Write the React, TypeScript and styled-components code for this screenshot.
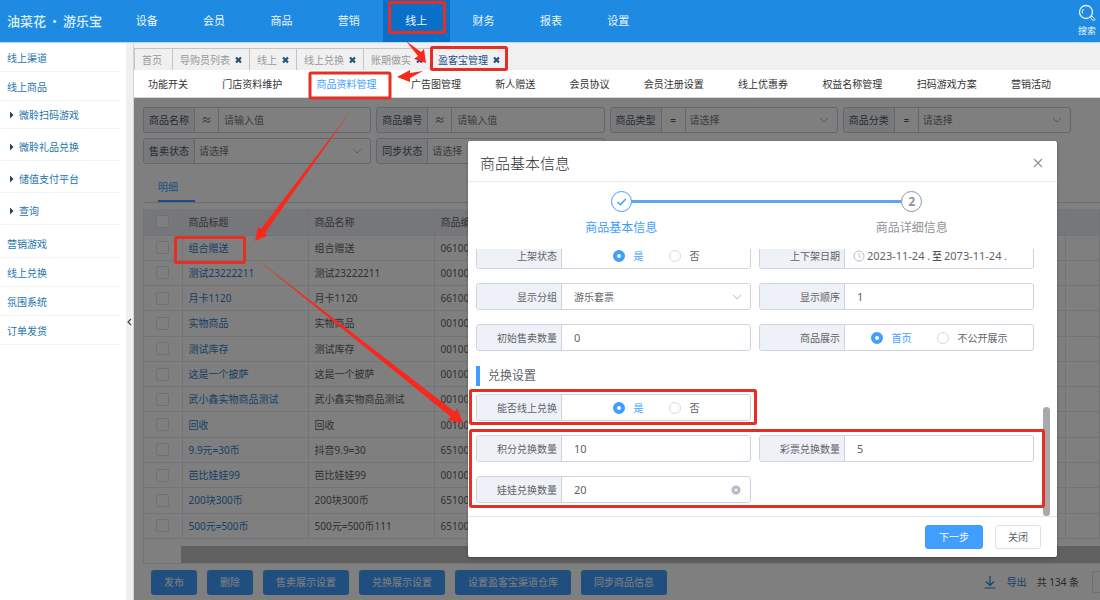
import React from "react";
import styled, { createGlobalStyle, css } from "styled-components";

const Global = createGlobalStyle`
  * { box-sizing: border-box; }
  body {
    margin: 0;
    font-family: "Noto Sans", "Noto Sans CJK SC", sans-serif;
    font-size: 10px;
    line-height: 16px;
    color: #303133;
    background: #fff;
  }
  button, input, select { font: inherit; color: inherit; margin: 0; }
  button { cursor: pointer; }
  a { text-decoration: none; color: inherit; }
  ul { list-style: none; margin: 0; padding: 0; }
  h1, h2 { margin: 0; font-weight: 400; }
`;

const Page = styled.div`
  position: relative;
  display: flex;
  flex-direction: column;
  min-height: 100vh;
  overflow: hidden;
`;

/* ---------- top bar ---------- */
const TopBar = styled.header`
  display: flex;
  height: 43px;
  background: #1e8ae2;
  border-bottom: 1px solid #b5dbf8;
  color: #eaf5ff;
`;
const Brand = styled.h1`
  width: 113px;
  padding-left: 7px;
  font-size: 13px;
  font-weight: 500;
  line-height: 42px;
  white-space: nowrap;
  color: #d9f0ff;
  span { padding: 0 2px; }
`;
const TopNav = styled.nav`
  display: flex;
  width: 49%;
`;
const TopLink = styled.a<{ $active?: boolean }>`
  flex: 1;
  text-align: center;
  font-size: 11px;
  line-height: 41px;
  background: ${(p) => (p.$active ? "#0a6fc8" : "transparent")};
`;
const SearchButton = styled.button`
  display: flex;
  flex-direction: column;
  align-items: center;
  margin-left: auto;
  padding: 4px 4px 0;
  border: 0;
  background: none;
  font-size: 9px;
  line-height: 12px;
  svg { display: block; margin-bottom: 2px; }
`;

/* ---------- side menu ---------- */
const Body = styled.div`
  display: flex;
  flex: 1;
`;
const Side = styled.nav`
  width: 126px;
  background: #fff;
`;
const SideItem = styled.li<{ $parent?: boolean }>`
  margin-bottom: ${(p) => (p.$parent ? 4 : 0)}px;
  a {
    display: flex;
    align-items: center;
    gap: 5px;
    height: ${(p) => (p.$parent ? 28 : 29)}px;
    margin-right: 6px;
    padding-top: 1px;
    padding-left: ${(p) => (p.$parent ? 9 : 7)}px;
    border-bottom: 1px solid #f3f3f3;
    color: #2474ac;
  }
`;
const Collapse = styled.button`
  display: flex;
  align-items: center;
  justify-content: center;
  width: 8px;
  padding: 0;
  border: 0;
  border-right: 1px solid #d4d4d4;
  background: #f0f0f0;
`;

/* ---------- tabs ---------- */
const Main = styled.main`
  display: flex;
  flex: 1;
  flex-direction: column;
  min-width: 0;
`;
const TabStrip = styled.div`
  display: flex;
  height: 27px;
  padding-top: 5px;
  background: #f0f0f0;
`;
const Tab = styled.div<{ $active?: boolean }>`
  display: flex;
  align-items: center;
  gap: 5px;
  padding: 1px 7px 0;
  border: solid #c4c4c4;
  border-width: 1px 0 0 1px;
  color: ${(p) => (p.$active ? "#1d4f86" : "#999")};
  &:first-child { padding-right: 10px; }
  button {
    display: flex;
    padding: 0;
    border: 0;
    background: none;
    color: #23527c;
  }
`;
const SubNav = styled.nav`
  display: flex;
  justify-content: space-between;
  height: 28px;
  padding: 0 49px 0 14px;
  border-bottom: 1px solid #d8d8d8;
  background: #fff;
`;
const SubLink = styled.a<{ $active?: boolean }>`
  line-height: 28px;
  white-space: nowrap;
  color: ${(p) => (p.$active ? "#409eff" : "#333")};
`;

/* ---------- list page ---------- */
const Content = styled.section`
  position: relative;
  flex: 1;
  padding: 9px 0 0 9px;
  background: #fff;
`;
const Mask = styled.div`
  position: absolute;
  inset: 0;
  background: rgba(0, 0, 0, 0.5);
`;
const Filters = styled.form`
  display: grid;
  grid-template-columns: repeat(4, 1fr);
  gap: 5px;
  margin-right: 29px;
`;
const Filter = styled.div`
  display: flex;
  height: 26px;
  border: 1px solid #c8cdd8;
  border-radius: 3px;
  overflow: hidden;
  line-height: 24px;
  color: #505257;
  label {
    width: 51px;
    padding-left: 5px;
    background: #f0f3f8;
    border-right: 1px solid #c8cdd8;
  }
`;
const Operator = styled.span`
  width: 24px;
  text-align: center;
  border-right: 1px solid #c8cdd8;
`;
const FieldWrap = styled.span`
  display: flex;
  flex: 1;
  align-items: center;
  min-width: 0;
  padding-right: 8px;
`;
const control = css`
  flex: 1;
  min-width: 0;
  width: 100%;
  height: 100%;
  border: 0;
  outline: 0;
  background: transparent;
  appearance: none;
`;
const FilterInput = styled.input`
  ${control}
  padding: 0 5px;
  &::placeholder { color: #777; opacity: 1; }
`;
const FilterSelect = styled.select`
  ${control}
  padding: 0 4px;
  color: #777;
`;
const ViewTabs = styled.div`
  display: flex;
  margin-top: 9px;
  padding-left: 15px;
  border-bottom: 1px solid #d5d9e2;
  button {
    height: 29px;
    min-width: 37px;
    padding: 0;
    border: 0;
    border-bottom: 2px solid #409eff;
    background: none;
    color: #409eff;
    text-align: left;
    white-space: nowrap;
  }
`;
const TableBox = styled.div`
  margin-top: 6px;
  border: solid #e4e8ef;
  border-width: 0 0 1px 1px;
`;
const Col = styled.col<{ $w: number }>`
  width: ${(p) => p.$w}px;
`;
const Table = styled.table`
  width: 100%;
  height: 330px;
  border-collapse: collapse;
  table-layout: fixed;
  th, td {
    padding: 0 6px;
    border: solid #e4e8ef;
    border-width: 0 1px 1px 0;
    text-align: left;
    font-weight: 400;
    white-space: nowrap;
    overflow: hidden;
  }
  th { height: 26px; background: #eceff5; color: #666; }
  td { color: #606266; }
  td a { color: #2f7cc9; }
  th:first-child, td:first-child { padding: 0; text-align: center; }
`;
const Tick = styled.input`
  display: block;
  appearance: none;
  width: 13px;
  height: 13px;
  margin: 0 auto;
  border: 1px solid #dfe2e9;
  border-radius: 2px;
  background: #fff;
`;
const ScrollTrack = styled.div`
  height: 17px;
  margin: 7px 0 0 37px;
  background: #c1c1c1;
`;
const Actions = styled.div`
  display: flex;
  align-items: center;
  gap: 10px;
  height: 36px;
  padding-left: 8px;
`;
const ActionButton = styled.button`
  height: 25px;
  padding: 0 13px;
  border: 0;
  border-radius: 3px;
  background: #409eff;
  color: #fff;
  white-space: nowrap;
`;
const Exporter = styled.div`
  display: flex;
  align-items: center;
  gap: 10px;
  margin-left: auto;
  white-space: nowrap;
  color: #505257;
  a { display: flex; align-items: center; gap: 11px; color: #2f7be0; }
`;
const PageSize = styled.select`
  appearance: none;
  width: 8px;
  height: 22px;
  margin-left: 3px;
  padding: 0;
  border: 1px solid #dcdfe6;
  border-right: 0;
  border-radius: 3px 0 0 3px;
  background: #fff;
`;

/* ---------- dialog ---------- */
const Dialog = styled.div`
  position: absolute;
  top: 141px;
  right: 43px;
  width: 589px;
  border-radius: 2px;
  background: #fff;
  box-shadow: 0 1px 3px rgba(0, 0, 0, 0.3);
  color: #606266;
`;
const DialogHead = styled.div`
  display: flex;
  align-items: center;
  justify-content: space-between;
  height: 41px;
  padding: 3px 14px 0 12px;
  border-bottom: 1px solid #ebebeb;
  h2 { font-size: 15px; line-height: 24px; font-weight: 300; color: #303133; }
  button { display: flex; padding: 0; border: 0; background: none; color: #909399; }
`;
const Steps = styled.ol`
  display: flex;
  height: 67px;
  margin: 0;
  padding: 9px 0 0 8px;
  list-style: none;
`;
const Step = styled.li<{ $done?: boolean }>`
  position: relative;
  flex: 1;
  display: flex;
  flex-direction: column;
  align-items: center;
  gap: 7px;
  font-size: 12px;
  line-height: 18px;
  color: ${(p) => (p.$done ? "#409eff" : "#909399")};
  ${(p) =>
    p.$done &&
    css`
      &::after {
        content: "";
        position: absolute;
        top: 9px;
        left: 50%;
        width: 100%;
        height: 3px;
        background: #5ba6ef;
      }
    `}
`;
const StepDot = styled.span`
  position: relative;
  z-index: 1;
  display: flex;
  align-items: center;
  justify-content: center;
  width: 21px;
  height: 21px;
  border: 1px solid currentColor;
  border-radius: 50%;
  background: #fff;
  font-weight: 700;
`;
const FormScroll = styled.div`
  display: flex;
  height: 267px;
  overflow: hidden;
  padding-right: 7px;
`;
const Form = styled.form`
  flex: 1;
  margin-top: -7px;
  padding: 0 16px 0 8px;
`;
const ScrollThumb = styled.div`
  width: 7px;
  height: 109px;
  margin-top: auto;
  margin-left: -7px;
  border-radius: 4px;
  background: #a9a9a9;
`;
const Fields = styled.div`
  display: grid;
  grid-template-columns: 1fr 1fr;
  gap: 14px 8px;
`;
const Field = styled.div`
  display: flex;
  height: 27px;
  border: 1px solid #cdd3df;
  border-radius: 3px;
  overflow: hidden;
`;
const FieldLabel = styled.label`
  width: 85px;
  padding-right: 4px;
  border-right: 1px solid #cdd3df;
  background: #eef1f7;
  line-height: 26px;
  text-align: right;
`;
const Text = styled.input`
  ${control}
  padding: 0 12px;
  font-size: 11px;
`;
const Choice = styled.select`
  ${control}
  padding: 0 12px;
`;
const Radios = styled.div`
  display: flex;
  flex: 1;
  align-items: center;
  justify-content: center;
  gap: 25px;
`;
const RadioLabel = styled.label<{ $on?: boolean }>`
  display: flex;
  align-items: center;
  gap: 9px;
  color: ${(p) => (p.$on ? "#409eff" : "#606266")};
  input {
    appearance: none;
    width: 12px;
    height: 12px;
    border: 1px solid #d6dae2;
    border-radius: 50%;
    background: #fff;
  }
  input:checked { border: 4px solid #409eff; }
`;
const DateRange = styled.div`
  display: flex;
  flex: 1;
  align-items: center;
  gap: 2px;
  min-width: 0;
  padding-left: 8px;
  color: #303133;
  svg { flex: none; }
  input {
    width: 63px;
    padding: 0;
    border: 0;
    outline: 0;
    background: none;
    font-size: 11px;
    color: #606266;
  }
`;
const SectionTitle = styled.h2`
  height: 20px;
  margin: 15px 0 8px;
  padding-left: 8px;
  border-left: 4px solid #409eff;
  font-size: 12px;
  line-height: 20px;
`;
const Clear = styled.button`
  display: flex;
  padding: 0;
  border: 0;
  background: none;
`;
const DialogFoot = styled.div`
  display: flex;
  justify-content: flex-end;
  gap: 12px;
  height: 41px;
  padding: 8px 16px;
  border-top: 1px solid #e6e6e6;
`;
const FootButton = styled.button<{ $primary?: boolean }>`
  height: 24px;
  padding: 0 ${(p) => (p.$primary ? 13 : 12)}px;
  border: 1px solid ${(p) => (p.$primary ? "#409eff" : "#dcdfe6")};
  border-radius: 3px;
  background: ${(p) => (p.$primary ? "#409eff" : "#fff")};
  color: ${(p) => (p.$primary ? "#fff" : "#606266")};
`;
const Marks = styled.svg`
  position: absolute;
  top: 0;
  left: 0;
  pointer-events: none;
`;

const Chevron = () => (
  <svg width="10" height="10" viewBox="0 0 10 10" fill="none" stroke="#b4b9c4" aria-hidden="true">
    <path d="M1 3l4 4 4-4" />
  </svg>
);
const Cross = () => (
  <svg width="7" height="8" viewBox="0 0 7 8" stroke="currentColor" strokeWidth="2.2" aria-hidden="true">
    <path d="M1 1.500l5 5M6 1.500l-5 5" />
  </svg>
);
const Caret = () => (
  <svg width="5" height="8" viewBox="0 0 5 8" fill="#23405c" aria-hidden="true">
    <path d="M1 0.5L4.5 4 1 7.500z" />
  </svg>
);

const topLinks = ["设备", "会员", "商品", "营销", "线上", "财务", "报表", "设置"];
const sideLinks: [string, boolean][] = [
  ["线上渠道", false], ["线上商品", false], ["微聆扫码游戏", true], ["微聆礼品兑换", true],
  ["储值支付平台", true], ["查询", true], ["营销游戏", false], ["线上兑换", false],
  ["氛围系统", false], ["订单发货", false],
];
const tabs = ["首页", "导购员列表", "线上", "线上兑换", "账期做实", "盈客宝管理"];
const subLinks = [
  "功能开关", "门店资料维护", "商品资料管理", "广告图管理", "新人赠送", "会员协议",
  "会员注册设置", "线上优惠券", "权益名称管理", "扫码游戏方案", "营销活动",
];
const filters = [
  { label: "商品名称", op: "≈", select: false },
  { label: "商品编号", op: "≈", select: false },
  { label: "商品类型", op: "=", select: true },
  { label: "商品分类", op: "=", select: true },
  { label: "售卖状态", op: "", select: true },
  { label: "同步状态", op: "", select: true },
];
const rows = [
  ["组合赠送", "组合赠送", "061001"],
  ["测试23222211", "测试23222211", "001001"],
  ["月卡1120", "月卡1120", "661001"],
  ["实物商品", "实物商品", "001001"],
  ["测试库存", "测试库存", "001001"],
  ["这是一个披萨", "这是一个披萨", "001001"],
  ["武小鑫实物商品测试", "武小鑫实物商品测试", "001001"],
  ["回收", "回收", "001001"],
  ["9.9元=30币", "抖音9.9=30", "651001"],
  ["芭比娃娃99", "芭比娃娃99", "001001"],
  ["200块300币", "200块300币", "651001"],
  ["500元=500币", "500元=500币111", "651001"],
];
const actions = ["发布", "删除", "售卖展示设置", "兑换展示设置", "设置盈客宝渠道仓库", "同步商品信息"];

function RadioField({ id, label, options }: { id: string; label: string; options: string[] }) {
  const [value, setValue] = React.useState(options[0]);
  return (
    <Field role="radiogroup" aria-labelledby={id}>
      <FieldLabel as="span" id={id}>{label}</FieldLabel>
      <Radios>
        {options.map((o) => (
          <RadioLabel key={o} $on={o === value}>
            <input type="radio" name={id} checked={o === value} onChange={() => setValue(o)} />
            {o}
          </RadioLabel>
        ))}
      </Radios>
    </Field>
  );
}

function TextField({ id, label, value, clearable }: { id: string; label: string; value: string; clearable?: boolean }) {
  const [text, setText] = React.useState(value);
  return (
    <Field>
      <FieldLabel htmlFor={id}>{label}</FieldLabel>
      <FieldWrap>
        <Text id={id} value={text} onChange={(e) => setText(e.target.value)} />
        {clearable && (
          <Clear type="button" aria-label="清空" onClick={() => setText("")}>
            <svg width="12" height="12" viewBox="0 0 12 12">
              <circle cx="6" cy="6" r="4.500" fill="#b4b9cc" />
              <path d="M4.500 4.500l3 3M7.500 4.500l-3 3" stroke="#fff" />
            </svg>
          </Clear>
        )}
      </FieldWrap>
    </Field>
  );
}

export default function App() {
  return (
    <Page>
      <Global />
      <TopBar>
        <Brand>油菜花<span>・</span>游乐宝</Brand>
        <TopNav>
          {topLinks.map((t) => (
            <TopLink key={t} href="#" $active={t === "线上"}>{t}</TopLink>
          ))}
        </TopNav>
        <SearchButton>
          <svg width="18" height="19" viewBox="0 0 18 19" fill="none" stroke="#e6f4ff" strokeWidth="1.3">
            <circle cx="8" cy="8" r="6.500" />
            <path d="M4.500 9.500A4 4 0 0 1 5.500 5" strokeWidth="1" />
            <path d="M12.500 13.500l1.500-1.500 3 3.500-1.500 1.500z" strokeWidth="1" />
          </svg>
          搜索
        </SearchButton>
      </TopBar>
      <Body>
        <Side>
          <ul>
            {sideLinks.map(([t, parent]) => (
              <SideItem key={t} $parent={parent}>
                <a href="#">{parent && <Caret />}{t}</a>
              </SideItem>
            ))}
          </ul>
        </Side>
        <Collapse aria-label="收起菜单">
          <svg width="5" height="8" viewBox="0 0 5 8" fill="none" stroke="#444" strokeWidth="1.200">
            <path d="M4 1L1 4l3 3" />
          </svg>
        </Collapse>
        <Main>
          <TabStrip>
            {tabs.map((t, i) => (
              <Tab key={t} $active={i === tabs.length - 1}>
                {t}
                {i > 0 && <button aria-label={`关闭${t}`}><Cross /></button>}
              </Tab>
            ))}
          </TabStrip>
          <SubNav>
            {subLinks.map((t) => (
              <SubLink key={t} href="#" $active={t === "商品资料管理"}>{t}</SubLink>
            ))}
          </SubNav>
          <Content>
            <Filters>
              {filters.map((f, i) => (
                <Filter key={f.label}>
                  <label htmlFor={`filter-${i}`}>{f.label}</label>
                  {f.op && <Operator>{f.op}</Operator>}
                  <FieldWrap>
                    {f.select ? (
                      <>
                        <FilterSelect id={`filter-${i}`}><option>请选择</option></FilterSelect>
                        <Chevron />
                      </>
                    ) : (
                      <FilterInput id={`filter-${i}`} placeholder="请输入值" />
                    )}
                  </FieldWrap>
                </Filter>
              ))}
            </Filters>
            <ViewTabs><button>明细</button></ViewTabs>
            <TableBox>
              <Table>
                <colgroup>
                  <Col $w={38} />
                  <Col $w={126} />
                  <Col $w={126} />
                  <col />
                  <Col $w={34} />
                </colgroup>
                <thead>
                  <tr>
                    <th><Tick type="checkbox" aria-label="全选" /></th>
                    <th>商品标题</th>
                    <th>商品名称</th>
                    <th>商品编号</th>
                    <th />
                  </tr>
                </thead>
                <tbody>
                  {rows.map(([title, name, code]) => (
                    <tr key={title}>
                      <td><Tick type="checkbox" aria-label={title} /></td>
                      <td><a href="#">{title}</a></td>
                      <td>{name}</td>
                      <td>{code}</td>
                      <td />
                    </tr>
                  ))}
                </tbody>
              </Table>
              <ScrollTrack />
            </TableBox>
            <Actions>
              {actions.map((t) => <ActionButton key={t}>{t}</ActionButton>)}
              <Exporter>
                <a href="#">
                  <svg width="12" height="14" viewBox="0 0 12 14" fill="none" stroke="currentColor" strokeWidth="1.200">
                    <path d="M6 1v9M2 6.500l4 4 4-4M0.500 13h11" />
                  </svg>
                  导出
                </a>
                <span>共 134 条</span>
                <PageSize aria-label="每页条数" />
              </Exporter>
            </Actions>
            <Mask />
          </Content>
        </Main>
      </Body>

      <Dialog role="dialog" aria-labelledby="dialog-title">
        <DialogHead>
          <h2 id="dialog-title">商品基本信息</h2>
          <button aria-label="关闭">
            <svg width="10" height="10" viewBox="0 0 10 10" stroke="currentColor" strokeWidth="1.200">
              <path d="M1 1l8 8M9 1L1 9" />
            </svg>
          </button>
        </DialogHead>
        <Steps>
          <Step $done>
            <StepDot>
              <svg width="11" height="10" viewBox="0 0 11 10" fill="none" stroke="currentColor" strokeWidth="1.500">
                <path d="M1.500 5l2.800 2.800L9.800 2" />
              </svg>
            </StepDot>
            商品基本信息
          </Step>
          <Step>
            <StepDot>2</StepDot>
            商品详细信息
          </Step>
        </Steps>
        <FormScroll>
          <Form>
            <Fields>
              <RadioField id="shelf" label="上架状态" options={["是", "否"]} />
              <Field>
                <FieldLabel htmlFor="from">上下架日期</FieldLabel>
                <DateRange>
                  <svg width="12" height="12" viewBox="0 0 12 12" fill="none" stroke="#b9bdc7">
                    <circle cx="6" cy="6" r="5" />
                    <path d="M6 3v3.500l2 1" />
                  </svg>
                  <input id="from" defaultValue="2023-11-24 ." />
                  至
                  <input aria-label="结束日期" defaultValue="2073-11-24 ." />
                </DateRange>
              </Field>
              <Field>
                <FieldLabel htmlFor="group">显示分组</FieldLabel>
                <FieldWrap>
                  <Choice id="group"><option>游乐套票</option></Choice>
                  <Chevron />
                </FieldWrap>
              </Field>
              <TextField id="order" label="显示顺序" value="1" />
              <TextField id="initial" label="初始售卖数量" value="0" />
              <RadioField id="display" label="商品展示" options={["首页", "不公开展示"]} />
            </Fields>
            <SectionTitle>兑换设置</SectionTitle>
            <Fields>
              <RadioField id="online" label="能否线上兑换" options={["是", "否"]} />
              <span />
              <TextField id="points" label="积分兑换数量" value="10" />
              <TextField id="lottery" label="彩票兑换数量" value="5" />
              <TextField id="dolls" label="娃娃兑换数量" value="20" clearable />
            </Fields>
          </Form>
          <ScrollThumb />
        </FormScroll>
        <DialogFoot>
          <FootButton $primary>下一步</FootButton>
          <FootButton>关闭</FootButton>
        </DialogFoot>
      </Dialog>

      <Marks width="1100" height="600" viewBox="0 0 1100 600" aria-hidden="true">
        <g fill="none" stroke="#e62f24" strokeWidth="3">
          <rect x="389.500" y="2.500" width="55" height="30" rx="1" />
          <rect x="431.500" y="47.500" width="75" height="22" rx="1" />
          <rect x="310" y="73" width="80" height="25" rx="1" />
          <rect x="175.500" y="237.500" width="69" height="25" rx="1" />
          <rect x="470.500" y="390.500" width="285" height="33" rx="1" />
          <rect x="470.500" y="430.500" width="573" height="76" rx="1" />
        </g>
        <g fill="#f8281c">
          <path d="M350 112L261 229l-3-2-3 14 12-5-2-3z" />
          <path d="M254 257L455 412l2-4 6 15-16-3 4-3z" />
          <path d="M406 41l15 11 3-3 2 14-12-4 4-3z" />
          <path d="M423 71l-13 2v-3l-13 7 13 5v-4z" />
        </g>
      </Marks>
    </Page>
  );
}
